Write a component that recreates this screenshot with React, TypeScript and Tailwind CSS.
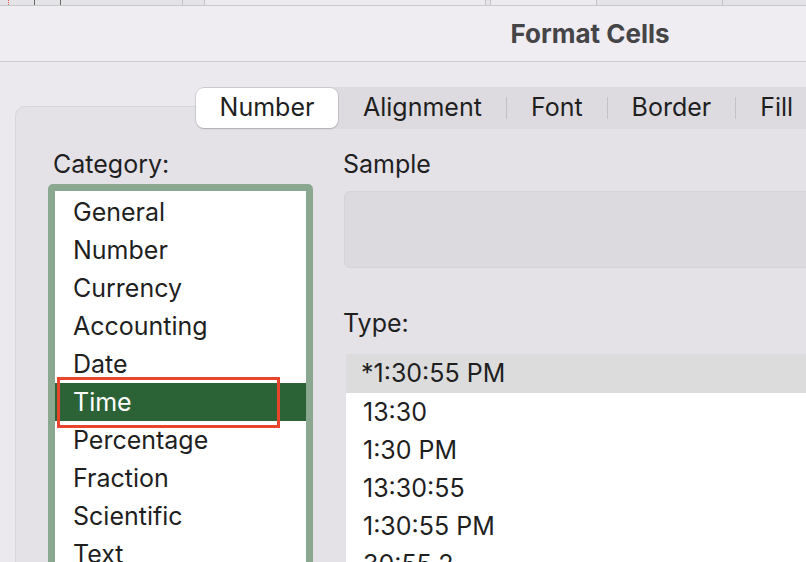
import React from 'react';

const categories = ['General', 'Number', 'Currency', 'Accounting', 'Date', 'Time', 'Percentage', 'Fraction', 'Scientific', 'Text', 'Special'];
const types = ['*1:30:55 PM', '13:30', '1:30 PM', '13:30:55', '1:30:55 PM', '30:55.2', '37:30:55'];
const tabs = ['Alignment', 'Font', 'Border', 'Fill', 'Protection'];

function SheetStrip() {
  // sliver of the spreadsheet peeking above the sheet dialog
  return (
    <div className="flex h-[6px] border-b border-[#c9c8cc] bg-[#e4e3e6]">
      <div className="w-[9px] border-r border-dotted border-[#e0574b]" />
      <div className="w-[26px] border-r border-[#6a6a6a]" />
      <div className="w-[26px] border-r border-[#6a6a6a]" />
      <div className="w-[122px] border-r border-[#c4c3c6]" />
      <div className="w-[22px] border-r border-[#c4c3c6]" />
      <div className="w-[281px] border-r border-[#c4c3c6] bg-[#eceaee]" />
      <div className="w-[5px] border-r border-[#c4c3c6]" />
      <div className="w-[106px] border-r border-[#c4c3c6] bg-[#eceaee]" />
      <div className="w-[126px] border-r border-[#c4c3c6]" />
      <div className="flex-1" />
    </div>
  );
}

export default function App() {
  return (
    <div
      className="w-[806px] h-[562px] overflow-hidden bg-[#ebe9ee] text-[#1f1f1f]"
      style={{ fontFamily: 'Inter, "Liberation Sans", sans-serif' }}
    >
      <SheetStrip />

      <header className="w-[1180px] h-[56px] flex items-center justify-center border-b border-[#cfcdd2] bg-[#efedf1]">
        <h1 className="text-[26px] font-bold text-[#454447]">Format Cells</h1>
      </header>

      <div className="w-[1180px] pl-[15px] pt-[25px]">
        <nav className="relative z-10 ml-[181px] h-[42px] flex items-center rounded-[9px] bg-[#dddbe0] text-[25px]">
          <button
            type="button"
            className="h-[40px] w-[142px] rounded-[8px] bg-white shadow-[0_0_0_1px_rgba(0,0,0,0.08),0_1px_2px_rgba(0,0,0,0.15)]"
          >
            Number
          </button>
          {tabs.map((t, i) => (
            <div key={t} className="flex items-center">
              {i > 0 && <span className="h-[22px] w-px bg-[#c3c1c6]" />}
              <span className={i === 0 ? 'pl-[25px] pr-[24px]' : 'px-[24px]'}>{t}</span>
            </div>
          ))}
        </nav>

        <section className="-mt-[23px] h-[600px] rounded-[10px] border border-[#d8d6db] bg-[#e4e2e7] pl-[32px] pt-[42px] flex gap-[30px]">
          <div className="flex flex-col">
            <div className="h-[30px] pl-[5px] leading-[30px] text-[25px]">Category:</div>
            <div className="mt-[5px] w-[265px] h-[420px] rounded-[5px] border-[7px] border-[#8aa88f] bg-white">
              <ul className="pt-[2px] text-[25px]">
                {categories.map((c) => (
                  <li
                    key={c}
                    className={
                      c === 'Time'
                        ? 'relative h-[38px] leading-[38px] pl-[18px] bg-[#2b6236] text-white'
                        : 'h-[38px] leading-[38px] pl-[18px]'
                    }
                  >
                    {c}
                    {c === 'Time' && (
                      <span className="absolute left-[2px] -top-[6px] w-[223px] h-[51px] border-[3px] border-[#e8452c]" />
                    )}
                  </li>
                ))}
              </ul>
            </div>
          </div>

          <div className="flex flex-col w-[800px]">
            <div className="h-[30px] leading-[30px] text-[25px]">Sample</div>
            <div className="mt-[12px] ml-px h-[77px] rounded-[6px] border border-[#d5d3d8] bg-[#dcdadf]" />
            <div className="mt-[40px] h-[30px] leading-[30px] text-[25px]">Type:</div>
            <ul className="mt-[16px] ml-[3px] bg-white text-[25px]">
              {types.map((t, i) => (
                <li
                  key={t}
                  className={i === 0 ? 'h-[39px] leading-[39px] pl-[15px] bg-[#dcdcdc]' : 'h-[38px] leading-[38px] pl-[17px]'}
                >
                  {t}
                </li>
              ))}
            </ul>
          </div>
        </section>
      </div>
    </div>
  );
}
